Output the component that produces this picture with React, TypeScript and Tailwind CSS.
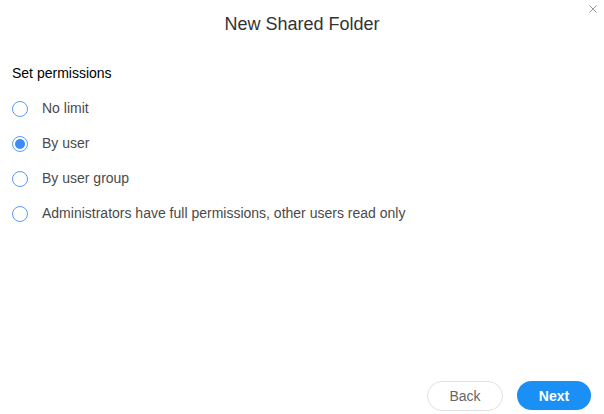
import { useState } from "react";

const OPTIONS = [
  "No limit",
  "By user",
  "By user group",
  "Administrators have full permissions, other users read only",
];

function Radio({ checked }: { checked: boolean }) {
  return (
    <span className="flex h-4 w-4 shrink-0 items-center justify-center rounded-full border border-[#5a9cf8] bg-white">
      {checked && <span className="h-[10px] w-[10px] rounded-full bg-[#3d8cf6]" />}
    </span>
  );
}

export default function App() {
  const [value, setValue] = useState(1);

  return (
    <div className="relative flex h-[414px] w-[604px] flex-col bg-white font-['Liberation_Sans',Arial,sans-serif]">
      <button aria-label="Close" className="absolute right-[7px] top-[5px] text-[#999]">
        <svg viewBox="0 0 8 8" className="h-2 w-2" fill="none" stroke="currentColor" strokeWidth="1">
          <path d="M0.5 0.5l7 7M7.5 0.5l-7 7" />
        </svg>
      </button>

      <div className="flex h-[45px] items-center justify-center pt-[3px]">
        <h1 className="text-[18px] text-[#333]">New Shared Folder</h1>
      </div>

      <div className="flex-1 px-3 pt-[18px]">
        <p className="text-[14px] font-medium leading-5 text-black">Set permissions</p>
        <div className="mt-[8px] flex flex-col">
          {OPTIONS.map((label, i) => (
            <label
              key={label}
              onClick={() => setValue(i)}
              className="flex h-[35px] cursor-pointer items-center gap-[14px] text-[14px] text-[#4a4a4a]"
            >
              <Radio checked={value === i} />
              <span>{label}</span>
            </label>
          ))}
        </div>
      </div>

      <div className="flex justify-end gap-[14px] pb-[3px] pr-[13px]">
        <button className="h-[30px] w-[76px] rounded-full border border-[#e0e0e0] bg-white text-[14px] text-[#666]">
          Back
        </button>
        <button className="h-[29px] w-[74px] rounded-full bg-[#1a8ff5] pt-[1px] text-[14px] font-bold text-white">
          Next
        </button>
      </div>
    </div>
  );
}
